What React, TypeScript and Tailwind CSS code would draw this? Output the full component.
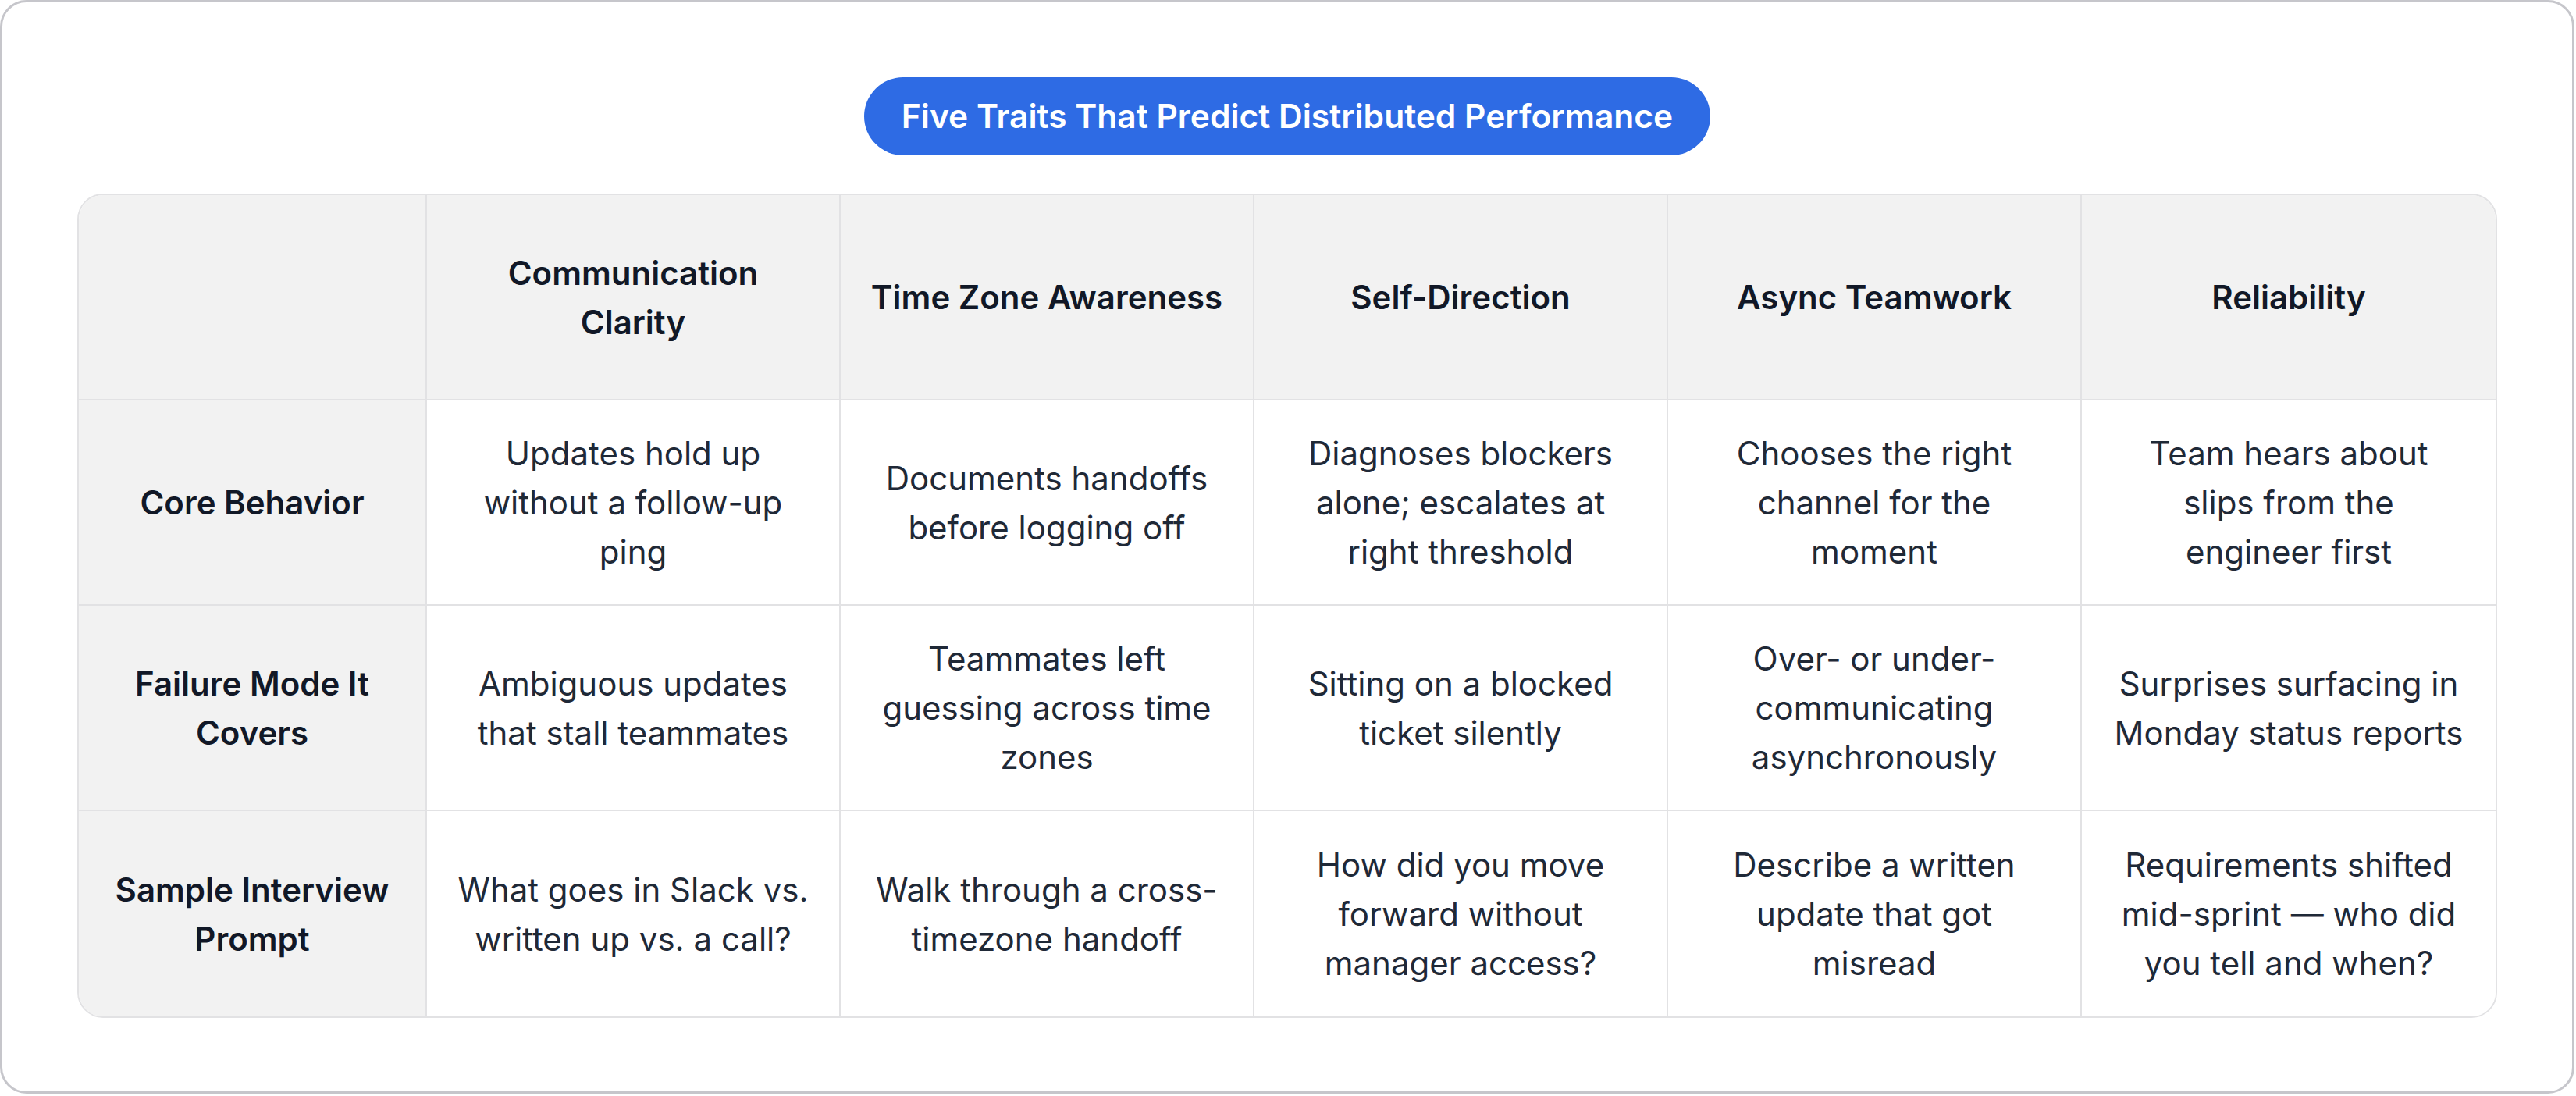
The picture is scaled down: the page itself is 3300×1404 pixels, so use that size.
import React from "react";

const columns = [
  "Communication Clarity",
  "Time Zone Awareness",
  "Self-Direction",
  "Async Teamwork",
  "Reliability",
];

const rows: { label: string; cells: string[] }[] = [
  {
    label: "Core Behavior",
    cells: [
      "Updates hold up without a follow-up ping",
      "Documents handoffs before logging off",
      "Diagnoses blockers alone; escalates at right threshold",
      "Chooses the right channel for the moment",
      "Team hears about slips from the engineer first",
    ],
  },
  {
    label: "Failure Mode It Covers",
    cells: [
      "Ambiguous updates that stall teammates",
      "Teammates left guessing across time zones",
      "Sitting on a blocked ticket silently",
      "Over- or under-communicating asynchronously",
      "Surprises surfacing in Monday status reports",
    ],
  },
  {
    label: "Sample Interview Prompt",
    cells: [
      "What goes in Slack vs. written up vs. a call?",
      "Walk through a cross-timezone handoff",
      "How did you move forward without manager access?",
      "Describe a written update that got misread",
      "Requirements shifted mid-sprint — who did you tell and when?",
    ],
  },
];

export default function App() {
  const allRows = [{ label: "", cells: columns, header: true }, ...rows.map((r) => ({ ...r, header: false }))];
  return (
    <div
      className="w-[3300px] h-[1404px] bg-white"
      style={{ fontFamily: "Inter, 'Noto Sans', sans-serif" }}
    >
      <div className="w-[3298px] h-[1401px] border-[3px] border-[#c6c6cb] rounded-[34px] bg-white flex flex-col items-center pt-[96px] px-[96px]">
        <div className="h-[100px] rounded-full bg-[#2e6be4] px-[48px] flex items-center justify-center">
          <span className="text-white text-[42.5px] font-semibold leading-none">
            Five Traits That Predict Distributed Performance
          </span>
        </div>
        <div className="mt-[49px] w-full border-2 border-[#e2e2e4] rounded-[33px] overflow-hidden grid grid-cols-[446px_repeat(5,minmax(0,1fr))] auto-rows-fr">
          {allRows.map((row, ri) => {
            const lastRow = ri === allRows.length - 1;
            return (
              <React.Fragment key={ri}>
                <div
                  className={`bg-[#f2f2f2] border-r-2 border-[#e2e2e4] ${lastRow ? "" : "border-b-2"} flex items-center justify-center text-center px-[38px] py-[36px] text-[42px] leading-[63px] font-semibold text-[#111827]`}
                >
                  {row.label}
                </div>
                {row.cells.map((c, ci) => {
                  const lastCol = ci === row.cells.length - 1;
                  return (
                    <div
                      key={ci}
                      className={`${row.header ? "bg-[#f2f2f2] font-semibold text-[#111827]" : "bg-white font-normal text-[#1f2937]"} ${lastCol ? "" : "border-r-2"} ${lastRow ? "" : "border-b-2"} border-[#e2e2e4] flex items-center justify-center text-center px-[38px] py-[36px] text-[42px] leading-[63px]`}
                    >
                      {c}
                    </div>
                  );
                })}
              </React.Fragment>
            );
          })}
        </div>
      </div>
    </div>
  );
}
